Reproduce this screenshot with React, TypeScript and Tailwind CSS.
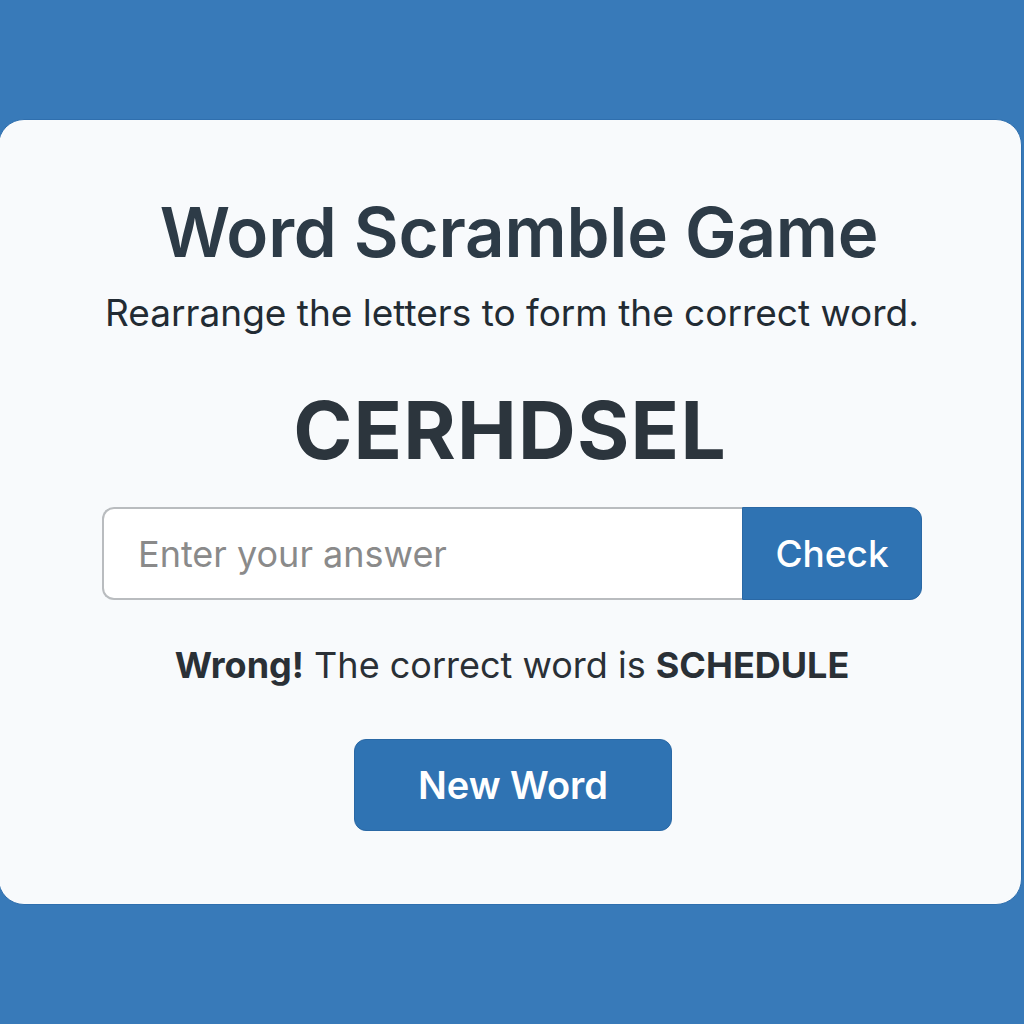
import React from "react";

export default function App() {
  return (
    <div className="w-[1024px] h-[1024px] bg-[#387ab9] pt-[119px] overflow-hidden" style={{ fontFamily: "Inter, 'Noto Sans', sans-serif" }}>
      <div className="ml-[-2px] w-[1024px] h-[786px] bg-[#f8fafc] rounded-[26px] border border-[#2f6fae] flex flex-col items-center">
        <h1 className="mt-[72px] ml-[18px] text-[69px] leading-[80px] font-semibold text-[#2d3b47] tracking-[-0.2px]">Word Scramble Game</h1>
        <p className="mt-[19px] ml-[4px] text-[37px] leading-[44px] text-[#222b33]">Rearrange the letters to form the correct word.</p>
        <div className="mt-[50px] text-[80px] leading-[90px] font-bold text-[#2c353d] tracking-[1.2px]">CERHDSEL</div>
        <div className="mt-[32px] flex w-[820px] h-[93px] ml-[4px]">
          <input
            placeholder="Enter your answer"
            className="flex-1 h-full rounded-l-[12px] border-2 border-r-0 border-[#b9bcbf] bg-white px-[34px] text-[36px] text-[#333] placeholder:text-[#8a8a8a] outline-none"
          />
          <button className="w-[180px] h-full rounded-r-[12px] bg-[#2f73b3] border border-[#2a68a5] text-white text-[37px] font-medium">Check</button>
        </div>
        <p className="mt-[43px] ml-[4px] text-[36px] leading-[44px] text-[#2a3036]">
          <span className="font-bold">Wrong!</span> The correct word is <span className="font-bold">SCHEDULE</span>
        </p>
        <button className="mt-[52px] ml-[6px] w-[318px] h-[92px] rounded-[12px] bg-[#2f73b3] border border-[#2a68a5] text-white text-[38px] font-semibold">New Word</button>
      </div>
    </div>
  );
}
